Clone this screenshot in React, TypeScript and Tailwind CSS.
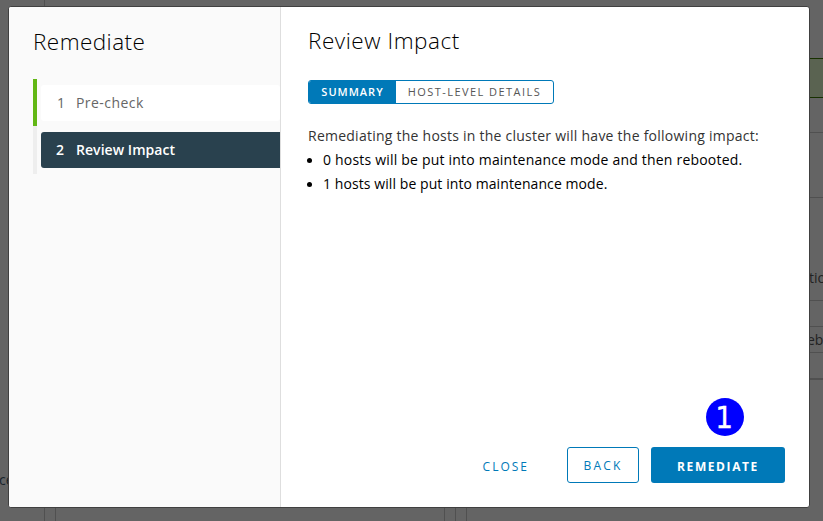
import type { ReactNode } from 'react';

function Backdrop() {
  return (
    <div className="flex h-full w-full bg-[#646464] text-[14px] text-[#222]">
      <div className="flex w-[45px] flex-col border-r border-[#505050]">
        <div className="mt-[470px] -ml-px leading-5 text-[#17232b]">ce</div>
      </div>
      <div className="mt-[500px] ml-[10px] w-[390px] border-x border-[#505050]" />
      <div className="mt-[500px] ml-[10px] w-px bg-[#505050]" />
      <div className="mt-[500px] ml-[10px] w-px bg-[#505050]" />
      <div className="ml-auto flex w-[14px] flex-col overflow-hidden">
        <div className="mt-[58px] h-10 border-y border-[#173000] bg-[#5a6351]" />
        <div className="h-[35px] border-b border-[#505050]" />
        <div className="h-[65px] border-b border-[#505050]" />
        <div className="h-[103px] border-b border-[#505050] pt-[70px] leading-5">tio</div>
        <div className="h-[26px] border-b border-[#505050]" />
        <div className="h-[26px] border-b border-[#505050] leading-[25px]"><span className="-ml-0.5">eb</span></div>
        <div className="h-[27px] border-b-2 border-[#505050]" />
      </div>
    </div>
  );
}

function Label({ children, className }: { children: ReactNode; className: string }) {
  return <span className={`whitespace-nowrap ${className}`}>{children}</span>;
}

export default function App() {
  return (
    <div className="relative h-[521px] w-[823px] overflow-hidden font-['Open_Sans','Noto_Sans',sans-serif]">
      <Backdrop />
      <div className="absolute top-[6px] left-[8px] flex h-[502px] w-[802px] overflow-hidden rounded-[3px] border border-[#404040] bg-white">
        <aside className="w-[272px] shrink-0 border-r border-[#dedede] bg-[#fafafa] pl-6">
          <h1 className="h-[72px] pt-[19px] text-[22.5px] leading-8 font-light text-black">
            <Label className="tracking-[0.45px]">Remediate</Label>
          </h1>
          <div className="flex h-[47px] border-l-4 border-[#62b715] pt-[6px] pb-[5px] pl-1">
            <div className="flex h-9 flex-1 items-center rounded-[3px] bg-white pb-0.5 text-[14px] text-[#666]">
              <span className="w-[35px] pl-4">1</span>
              <Label className="tracking-[0.45px]">Pre-check</Label>
            </div>
          </div>
          <div className="flex h-12 border-l-4 border-[#eee] pt-[6px] pl-1">
            <div className="flex h-9 flex-1 items-center rounded-l-[3px] bg-[#29414e] pb-0.5 text-[14px] font-semibold text-white">
              <span className="w-[35px] pl-[15px]">2</span>
              <Label className="tracking-[0.05px]">Review Impact</Label>
            </div>
          </div>
        </aside>
        <main className="flex flex-1 flex-col pr-6 pl-[27px]">
          <h2 className="h-[73px] pt-[18px] text-[22.5px] leading-8 font-light text-black">
            <Label className="tracking-[0.55px]">Review Impact</Label>
          </h2>
          <div className="flex h-6 w-[246px] overflow-hidden rounded-[3px] border border-[#0079b8] text-[11px] leading-[22px]">
            <button className="w-[87px] bg-[#0079b8] font-semibold text-white"><Label className="tracking-[1px]">SUMMARY</Label></button>
            <button className="flex-1 text-[#565656]"><Label className="tracking-[1.45px]">HOST-LEVEL DETAILS</Label></button>
          </div>
          <p className="mt-5 text-[14px] leading-6 text-[#333]">
            <Label className="tracking-[0.245px]">Remediating the hosts in the cluster will have the following impact:</Label>
          </p>
          <ul className="text-[14px] leading-6 text-black">
            <li className="flex items-center"><span className="mt-px mr-[11px] ml-[-1px] size-[5px] rounded-full bg-black" /><Label className="tracking-[0.2px]">0 hosts will be put into maintenance mode and then rebooted.</Label></li>
            <li className="flex items-center"><span className="mt-px mr-[11px] ml-[-1px] size-[5px] rounded-full bg-black" /><Label className="tracking-[0.08px]">1 hosts will be put into maintenance mode.</Label></li>
          </ul>
          <footer className="mt-auto mb-6 flex justify-end gap-3 text-[12px]">
            <button className="mr-[26px] pt-1 font-medium text-[#0079b8]"><Label className="tracking-[2px]">CLOSE</Label></button>
            <button className="h-9 w-[72px] rounded-[3px] border border-[#0079b8] pt-px font-medium text-[#0079b8]"><Label className="tracking-[2.2px]">BACK</Label></button>
            <button className="h-9 w-[134px] rounded-[3px] bg-[#0079b8] pt-[3px] font-bold text-white"><Label className="tracking-[1.6px]">REMEDIATE</Label></button>
          </footer>
        </main>
      </div>
      <div className="absolute top-[398px] left-[706px] flex size-[38px] items-center justify-center rounded-full bg-[#0000ff] pr-0.5 font-['DejaVu_Sans_Condensed','DejaVu_Sans',sans-serif] text-[31px] leading-[38px] text-white [-webkit-text-stroke:0.3px_white]">1</div>
    </div>
  );
}
